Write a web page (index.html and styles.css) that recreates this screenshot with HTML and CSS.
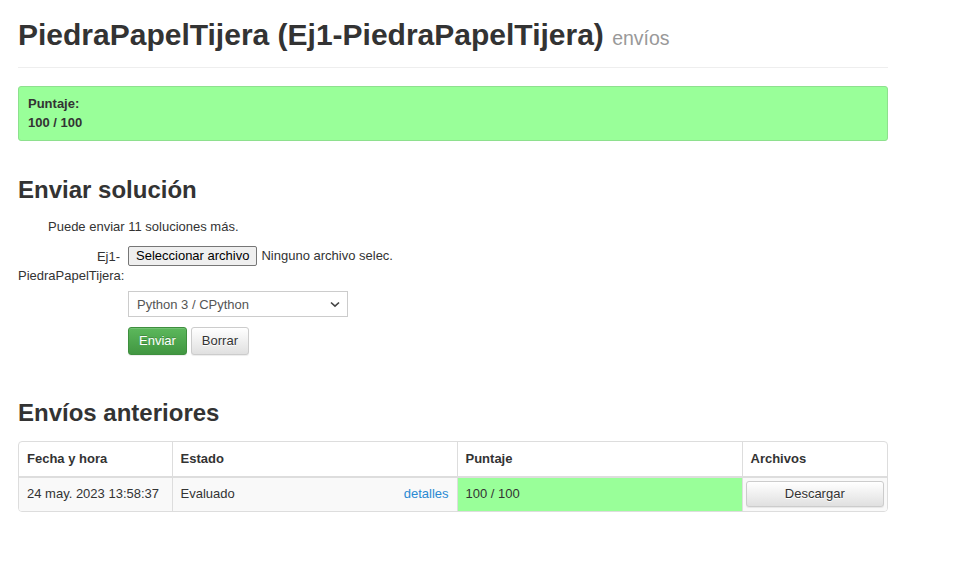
FILE: index.html
```html
<!DOCTYPE html>
<html lang="es">
<head>
<meta charset="utf-8">
<title>PiedraPapelTijera - envíos</title>
<link rel="stylesheet" href="styles.css">
</head>
<body>
<div class="container">
  <div class="page-header">
    <h1>PiedraPapelTijera (Ej1-PiedraPapelTijera) <small>envíos</small></h1>
  </div>

  <div class="alert">
    <strong>Puntaje:</strong><br>
    <strong>100 / 100</strong>
  </div>

  <h2 class="section-title first">Enviar solución</h2>

  <form class="submit-form">
    <p class="help">Puede enviar 11 soluciones más.</p>
    <div class="form-row file-row">
      <label class="form-label" for="file"><span class="lbl-first">Ej1-</span><br>PiedraPapelTijera:</label>
      <div class="file-input">
        <span class="file-btn">Seleccionar archivo</span>
        <span class="file-name">Ninguno archivo selec.</span>
      </div>
    </div>
    <div class="form-row select-row">
      <span class="form-label"></span>
      <div class="select-wrap">
        <select class="lang-select">
          <option>Python 3 / CPython</option>
        </select>
        <svg class="chev" width="10" height="7" viewBox="0 0 10 7"><path d="M1 1.5 L5 5.2 L9 1.5" fill="none" stroke="#444" stroke-width="1.6"/></svg>
      </div>
    </div>
    <div class="form-row btn-row">
      <span class="form-label"></span>
      <div class="btns">
        <button type="button" class="btn btn-primary">Enviar</button>
        <button type="button" class="btn btn-default">Borrar</button>
      </div>
    </div>
  </form>

  <h2 class="section-title second">Envíos anteriores</h2>

  <div class="table-wrap">
    <table class="runs">
      <colgroup>
        <col class="c1"><col class="c2"><col class="c3"><col class="c4">
      </colgroup>
      <thead>
        <tr>
          <th>Fecha y hora</th>
          <th>Estado</th>
          <th>Puntaje</th>
          <th>Archivos</th>
        </tr>
      </thead>
      <tbody>
        <tr>
          <td>24 may. 2023 13:58:37</td>
          <td><div class="status"><span>Evaluado</span><a href="#">detalles</a></div></td>
          <td class="score">100 / 100</td>
          <td class="files"><button type="button" class="btn btn-default btn-block">Descargar</button></td>
        </tr>
      </tbody>
    </table>
  </div>
</div>
</body>
</html>
```

FILE: styles.css
```css
* { box-sizing: border-box; }

html, body {
  margin: 0;
  padding: 0;
  background: #fff;
}

body {
  font-family: "Liberation Sans", Arial, Helvetica, sans-serif;
  font-size: 13px;
  line-height: 1.42857;
  color: #333;
}

.container {
  width: 870px;
  margin-left: 18px;
}

.page-header {
  padding-top: 18px;
  padding-bottom: 12px;
  border-bottom: 1px solid #eee;
}

.page-header h1 {
  margin: 0;
  font-size: 30px;
  line-height: 33px;
  font-weight: bold;
  color: #333;
}

.page-header h1 small {
  font-size: 19.5px;
  font-weight: normal;
  color: #999;
}

.alert {
  margin-top: 18px;
  background: #99ff99;
  border: 1px solid #8ee08e;
  border-radius: 3px;
  padding: 8px 9px;
}

.section-title {
  margin: 0;
  font-size: 24px;
  line-height: 26.4px;
  font-weight: bold;
  color: #333;
}

.section-title.first { margin-top: 36px; }
.section-title.second { margin-top: 45px; }

.submit-form {
  margin: 0;
}

.help {
  margin: 14px 0 0 30px;
}

.form-row {
  display: flex;
  gap: 4px;
}

.form-label {
  width: 106px;
  flex: none;
  text-align: right;
}

.lbl-first {
  margin-right: 4px;
}

.file-row {
  margin-top: 10px;
  align-items: flex-start;
}

.file-row .form-label {
  padding-top: 2px;
  line-height: 18.5px;
}

.file-input {
  display: flex;
  align-items: center;
  gap: 4px;
}

.file-btn {
  display: inline-block;
  height: 20px;
  padding: 0 7px;
  line-height: 18px;
  background: #efefef;
  border: 1px solid #767676;
  border-radius: 2px;
  color: #000;
  white-space: nowrap;
}

.file-name {
  color: #333;
  white-space: nowrap;
}

.select-row {
  margin-top: 6px;
}

.select-wrap {
  position: relative;
  width: 220px;
}

.lang-select {
  appearance: none;
  -webkit-appearance: none;
  width: 220px;
  height: 26px;
  padding: 0 8px;
  font-family: inherit;
  font-size: 13px;
  color: #555;
  background: #fff;
  border: 1px solid #ccc;
  border-radius: 0;
}

.chev {
  position: absolute;
  right: 8px;
  top: 10px;
  pointer-events: none;
}

.btn-row {
  margin-top: 10px;
}

.btns {
  display: flex;
  gap: 4px;
}

.btn {
  display: inline-block;
  font-family: inherit;
  font-size: 13px;
  line-height: 18px;
  padding: 4px 10px;
  border-radius: 3px;
  border: 1px solid transparent;
  cursor: pointer;
}

.btn-primary {
  color: #fff;
  background-image: linear-gradient(to bottom, #5cb85c 0%, #419641 100%);
  border-color: #3e8f3e;
  text-shadow: 0 -1px 0 rgba(0,0,0,0.2);
  box-shadow: inset 0 1px 0 rgba(255,255,255,0.15), 0 1px 1px rgba(0,0,0,0.075);
}

.btn-default {
  color: #333;
  background-image: linear-gradient(to bottom, #fff 0%, #e0e0e0 100%);
  border-color: #ccc;
  text-shadow: 0 1px 0 #fff;
  box-shadow: inset 0 1px 0 rgba(255,255,255,0.15), 0 1px 1px rgba(0,0,0,0.075);
}

.btn-block {
  display: block;
  width: 100%;
  height: 26px;
  padding: 3px 10px;
}

.table-wrap {
  margin-top: 14px;
  border: 1px solid #ddd;
  border-radius: 4px;
  overflow: hidden;
}

.runs {
  width: 100%;
  border-collapse: collapse;
  table-layout: fixed;
}

.runs col.c1 { width: 153px; }
.runs col.c2 { width: 285px; }
.runs col.c3 { width: 285px; }
.runs col.c4 { width: auto; }

.runs th,
.runs td {
  padding: 7px 8px;
  line-height: 18px;
  text-align: left;
  vertical-align: middle;
  border-left: 1px solid #ddd;
}

.runs th:first-child,
.runs td:first-child {
  border-left: none;
}

.runs th {
  font-weight: bold;
  border-bottom: 2px solid #ddd;
  height: 35px;
}

.runs tbody tr {
  background: #f9f9f9;
}

.runs td {
  height: 34px;
}

.status {
  display: flex;
  justify-content: space-between;
}

.status a {
  color: #2a8ad3;
  text-decoration: none;
}

.runs td.score {
  background: #99ff99;
}

.runs td.files {
  padding: 3px 3px;
}
```
